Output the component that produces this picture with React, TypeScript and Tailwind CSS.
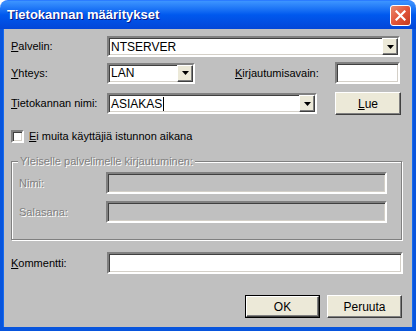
import React from 'react';

const sunken =
  'border-2 border-t-[#808080] border-l-[#808080] border-b-white border-r-white shadow-[inset_1px_1px_0_#404040,inset_-1px_-1px_0_#d4d0c8]';
const raised =
  'bg-[#ece9d8] border border-t-white border-l-white border-b-[#404040] border-r-[#404040] shadow-[inset_-1px_-1px_0_#808080]';
const disabledText = 'text-[#808080] [text-shadow:1px_1px_0_#ffffff]';

function Combo({ value, width, caret }: { value: string; width: string; caret?: boolean }) {
  return (
    <div className={`${width} h-[21px] bg-white flex items-center ${sunken}`}>
      <div className="flex-1 pl-[2px] text-[12px] text-black leading-none flex items-center">
        {value}
        {caret && <span className="inline-block w-[1px] h-[14px] bg-black ml-[1px]" />}
      </div>
      <div className={`w-[16px] h-[17px] flex items-center justify-center ${raised}`}>
        <svg width="7" height="4" viewBox="0 0 7 4">
          <path d="M0 0h7L3.5 4z" fill="#000" />
        </svg>
      </div>
    </div>
  );
}

function Btn({ children, def }: { children: React.ReactNode; def?: boolean }) {
  return (
    <div className={`w-[75px] h-[23px] ${def ? 'border border-black' : ''}`}>
      <div className={`w-full h-full flex items-center justify-center text-black text-[12px] ${raised}`}>
        {children}
      </div>
    </div>
  );
}

export default function App() {
  return (
    <div className="w-[416px] h-[331px] flex flex-col font-['Liberation_Sans',Arial,sans-serif] text-[11px] text-black select-none">
      <div className="h-[29px] rounded-t-[8px] bg-gradient-to-b from-[#3d95ff] via-[#0058ee] to-[#0346d8] flex items-center pl-[7px] pr-[5px] border-t border-[#2b7cff]">
        <span className="flex-1 text-white font-bold text-[13px] [text-shadow:1px_1px_0_#0a1883]">
          Tietokannan määritykset
        </span>
        <div className="w-[21px] h-[21px] rounded-[3px] border border-white bg-gradient-to-br from-[#e88a6e] via-[#e2553a] to-[#c33a1d] flex items-center justify-center">
          <svg width="11" height="11" viewBox="0 0 11 11">
            <path d="M1.5 1.5l8 8M9.5 1.5l-8 8" stroke="#fff" strokeWidth="2.2" strokeLinecap="square" />
          </svg>
        </div>
      </div>

      <div className="flex-1 bg-[#0855dd] px-[3px] pb-[4px]">
        <div className="h-full bg-[#c0c0c0] border-l border-r border-[#166aee] pl-[7px] pt-[7px] flex flex-col">
          <div className="flex items-center">
            <span className="w-[96px]"><u>P</u>alvelin:</span>
            <Combo value="NTSERVER" width="w-[293px]" />
          </div>

          <div className="flex items-center mt-[5px]">
            <span className="w-[96px]"><u>Y</u>hteys:</span>
            <Combo value="LAN" width="w-[88px]" />
            <span className="ml-[40px] w-[100px]"><u>K</u>irjautumisavain:</span>
            <div className={`w-[65px] h-[22px] bg-white ${sunken}`} />
          </div>

          <div className="flex items-center mt-[8px] h-[23px]">
            <span className="w-[96px]"><u>T</u>ietokannan nimi:</span>
            <Combo value="ASIAKAS" width="w-[210px]" caret />
            <div className="ml-[18px] w-[66px] h-[23px]">
              <div className={`w-full h-full flex items-center justify-center text-[12px] ${raised}`}>
                <span><u>L</u>ue</span>
              </div>
            </div>
          </div>

          <div className="flex items-center mt-[15px] h-[13px]">
            <div className={`w-[13px] h-[13px] bg-white ${sunken}`} />
            <span className="ml-[5px]"><u>E</u>i muita käyttäjiä istunnon aikana</span>
          </div>

          <div className="relative mt-[18px] w-[391px] h-[79px] border border-[#808080] shadow-[inset_1px_1px_0_#ffffff,1px_1px_0_#ffffff] pl-[7px] pt-[10px]">
            <span className={`absolute left-[6px] top-[-7px] px-[2px] bg-[#c0c0c0] leading-[13px] ${disabledText}`}>
              Yleiselle palvelimelle kirjautuminen:
            </span>
            <div className="flex items-center">
              <span className={`w-[87px] ${disabledText}`}>Nimi:</span>
              <div className={`w-[281px] h-[22px] bg-[#c0c0c0] ${sunken}`} />
            </div>
            <div className="flex items-center mt-[7px]">
              <span className={`w-[87px] ${disabledText}`}>Salasana:</span>
              <div className={`w-[281px] h-[22px] bg-[#c0c0c0] ${sunken}`} />
            </div>
          </div>

          <div className="flex items-center mt-[12px]">
            <span className="w-[96px]"><u>K</u>ommentti:</span>
            <div className={`w-[296px] h-[22px] bg-white ${sunken}`} />
          </div>

          <div className="flex justify-end gap-[7px] w-[391px] mt-[21px]">
            <Btn def>OK</Btn>
            <Btn>Peruuta</Btn>
          </div>
        </div>
      </div>
    </div>
  );
}
